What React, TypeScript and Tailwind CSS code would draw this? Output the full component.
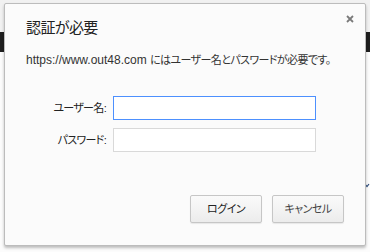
import React from "react";

export default function App() {
  const font = {
    fontFamily: '"Liberation Sans", "Noto Sans CJK JP", sans-serif',
  };
  return (
    <div
      className="relative w-[370px] h-[252px] overflow-hidden bg-[#f1f1f1] [font-feature-settings:'palt']"
      style={font}
    >
      {/* page behind the dialog */}
      <div className="absolute left-0 right-0 top-[32px] h-[20px] bg-[#1f1f1f]" />
      <div className="absolute left-0 right-0 top-[52px] bottom-0 bg-[#fcfcfc]" />
      <svg className="absolute left-[364px] top-[183px]" width="6" height="5" viewBox="0 0 6 5">
        <path d="M1 1 L3 3.5 L5 1" stroke="#2a4a7a" strokeWidth="1.2" fill="none" />
      </svg>

      {/* dialog */}
      <div className="relative ml-[4px] mt-[3px] w-[362px] h-[243px] rounded-[2px] border border-[#bcbcbc] bg-[#fbfbfb] shadow-[0_2px_3px_rgba(0,0,0,0.25)]">
        <button className="absolute right-[10px] top-[10px] w-[10px] h-[10px] flex items-center justify-center">
          <svg width="8" height="8" viewBox="0 0 8 8">
            <path d="M1 1 L7 7 M7 1 L1 7" stroke="#7a7a7a" strokeWidth="1.8" />
          </svg>
        </button>

        <div className="pl-[21px] pt-[14px]">
          <div className="text-[15px] leading-[20px] text-[#222] tracking-[-0.6px]">認証が必要</div>
          <div className="mt-[14px] text-[12px] leading-[16px] text-[#333]">
            https://www.out48.com{" "}
            <span className="text-[11px] tracking-[-0.6px]">にはユーザー名とパスワードが必要です。</span>
          </div>

          <div className="mt-[28px] flex flex-col gap-[8px]">
            <div className="flex items-center">
              <label className="w-[80px] text-right text-[11px] tracking-[-0.7px] text-[#222]">ユーザー名:</label>
              <input
                className="ml-[7px] w-[203px] h-[24px] border border-[#4d90fe] bg-white outline-none"
                type="text"
              />
            </div>
            <div className="flex items-center">
              <label className="w-[80px] text-right text-[11px] tracking-[-0.7px] text-[#222]">パスワード:</label>
              <input
                className="ml-[7px] w-[203px] h-[24px] border border-[#d9d9d9] bg-white outline-none"
                type="password"
              />
            </div>
          </div>
        </div>

        <div className="absolute right-[21px] top-[191px] flex gap-[10px]">
          <button className="w-[72px] h-[28px] rounded-[2px] border border-[#c6c6c6] bg-gradient-to-b from-[#fafafa] to-[#ececec] text-[11px] tracking-[-0.5px] text-[#222] shadow-[0_1px_1px_rgba(0,0,0,0.08)]">
            ログイン
          </button>
          <button className="w-[72px] h-[28px] rounded-[2px] border border-[#c6c6c6] bg-gradient-to-b from-[#fafafa] to-[#ececec] text-[11px] tracking-[-0.5px] text-[#444] shadow-[0_1px_1px_rgba(0,0,0,0.08)]">
            キャンセル
          </button>
        </div>
      </div>
    </div>
  );
}
